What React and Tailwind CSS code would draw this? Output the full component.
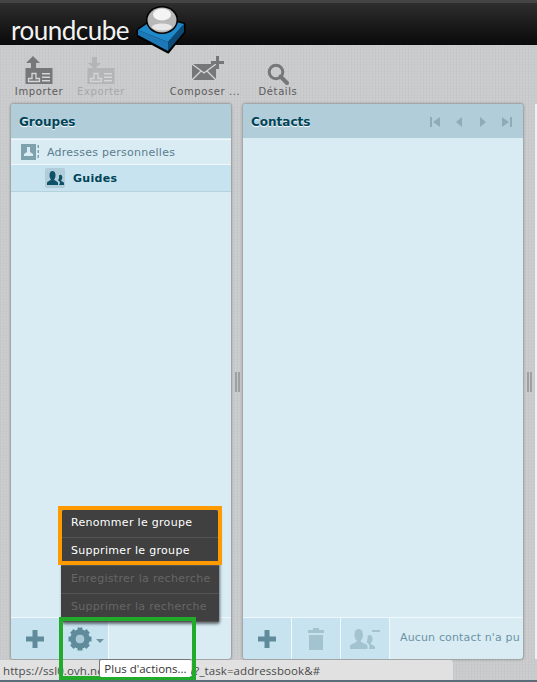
import React from "react";

const F = "font-['DejaVu_Sans',Verdana,sans-serif]";

function CardIcon({ dim, down }) {
  const c = dim ? "#b3b5b6" : "#757779";
  return (
    <svg width="28" height="29" viewBox="0 0 28 29" className="block">
      <rect x="0.5" y="12" width="27" height="16" fill={c} />
      {down ? (
        <path d="M5 1h5v6h4l-6.500 6L1 7h4z" fill={c} />
      ) : (
        <path d="M8 0l7 7h-4v7H6V7H1z" fill={c} />
      )}
      <path d="M3.500 25.500v-3h3.500v-5h4v5h3.500v3z" fill="none" stroke="#d4d6d7" strokeWidth="1.3" />
      <path d="M17 17h8v1.500h-8zM17 20.500h8V22h-8zM17 24h8v1.500h-8z" fill="#d4d6d7" />
    </svg>
  );
}

function MailIcon() {
  return (
    <svg width="32" height="29" viewBox="0 0 32 29" className="block">
      <path d="M0 8h24v16H0z" fill="#757779" />
      <path d="M0 8l12 9 12-9M0 24l9-9M24 24l-9-9" fill="none" stroke="#d4d6d7" strokeWidth="1.3" />
      <path d="M24 0h3v5h5v3h-5v5h-3V8h-5V5h5z" fill="#757779" />
    </svg>
  );
}

function SearchIcon() {
  return (
    <svg width="22" height="22" viewBox="0 0 22 22" className="block">
      <circle cx="9" cy="9" r="6.800" fill="none" stroke="#757779" strokeWidth="3" />
      <path d="M13.500 13.500L20 20" stroke="#757779" strokeWidth="4" strokeLinecap="round" />
    </svg>
  );
}

function Logo() {
  return (
    <div className="flex items-start h-[45px] relative">
      <span className="font-['Lato',sans-serif] font-normal text-[26px] leading-none text-[#f2f2f2] tracking-[-0.5px] ml-[11px] mt-[17px]">
        roundcube
      </span>
      <svg width="52" height="50" viewBox="0 0 52 50" className="absolute left-[136px] top-[5px]">
        <path d="M2 25L21 12l27 7v8L32 47 2 31z" fill="#000" stroke="#000" strokeWidth="3" strokeLinejoin="round" />
        <path d="M2 25l30 12v9L2 30z" fill="#1d78b8" />
        <path d="M32 37l16-18v8L32 46z" fill="#0d4a78" />
        <path d="M2 25L21 12l27 7-16 18z" fill="#1f8acb" />
        <ellipse cx="26" cy="15" rx="16" ry="14" fill="#000" />
        <ellipse cx="26" cy="15" rx="14.500" ry="12.500" fill="#b8b8b8" />
        <ellipse cx="26" cy="9.500" rx="9" ry="6" fill="#f4f4f4" />
        <ellipse cx="26" cy="22" rx="10" ry="3.500" fill="#e8e8e8" />
      </svg>
    </div>
  );
}

function ToolBtn({ label, dim, icon, w, shift }) {
  return (
    <div className={`flex flex-col items-center ${w}`}>
      <div className={`h-[32px] flex items-end justify-center ${shift || ""}`}>{icon}</div>
      <span className={`text-[10px] leading-[12px] mt-[1px] tracking-[0.6px] whitespace-nowrap ${dim ? "text-[#a6a8a9]" : "text-[#5e5a5c]"}`}>
        {label}
      </span>
    </div>
  );
}

function Pager() {
  const c = "#8fabb8";
  return (
    <div className="flex items-center gap-[14px] mr-[11px] mt-[1px]">
      <svg width="10" height="10" viewBox="0 0 10 10"><path d="M0 0h2v10H0zM10 0v10L3 5z" fill={c} /></svg>
      <svg width="10" height="10" viewBox="0 0 10 10"><path d="M8 0v10L2 5z" fill={c} /></svg>
      <svg width="10" height="10" viewBox="0 0 10 10"><path d="M2 0v10l6-5z" fill={c} /></svg>
      <svg width="10" height="10" viewBox="0 0 10 10"><path d="M10 0H8v10h2zM0 0v10l7-5z" fill={c} /></svg>
    </div>
  );
}

function Plus({ color = "#5f8b9b" }) {
  return (
    <svg width="18" height="18" viewBox="0 0 18 18" className="block">
      <path d="M6.500 0h5v6.500H18v5h-6.500V18h-5v-6.500H0v-5h6.500z" fill={color} />
    </svg>
  );
}

function Gear() {
  return (
    <svg width="24" height="24" viewBox="0 0 24 24" className="block">
      <g fill="#5f8b9b">
        {[0, 45, 90, 135, 180, 225, 270, 315].map((a) => (
          <rect key={a} x="9.500" y="0.500" width="5" height="5" transform={`rotate(${a} 12 12)`} />
        ))}
      </g>
      <circle cx="12" cy="12" r="7" fill="none" stroke="#5f8b9b" strokeWidth="5.500" />
      <circle cx="12" cy="12" r="4" fill="#a9c9d6" />
    </svg>
  );
}

function Trash() {
  return (
    <svg width="18" height="22" viewBox="0 0 18 22" className="block">
      <path d="M6 0h6v2h5v3H1V2h5zM2 7h14v15H2z" fill="#a3c3d1" />
    </svg>
  );
}

function UserMinus() {
  return (
    <svg width="30" height="22" viewBox="0 0 30 22" className="block">
      <path d="M0 21v-3c0-2 6-3 7-5-2-2-2.500-4-2.500-6C4.500 3 6 1 8.500 1S13 3 13 7c0 2-.5 4-2.500 6 1 2 7 3 7 5v3z" fill="#a3c3d1" />
      <path d="M19 21h6v-2c0-1.500-3.500-2-4.500-3.500 1.500-1.500 2-3 2-4.500 0-2.500-1-4-3-4-1 0-1.500.5-2 1 .5 2 0 4-1 6 2 2 3 2.500 3 4z" fill="#a3c3d1" />
      <path d="M22 2h8v2h-8z" fill="#a3c3d1" />
    </svg>
  );
}

function FooterCell({ children }) {
  return (
    <div className="w-[49px] h-full bg-[#c7e3ef] border-r border-[#f0f8fb] flex items-center justify-center shrink-0">
      {children}
    </div>
  );
}

function Panel({ title, pager, width, children, footer }) {
  return (
    <section className={`${width} shrink-0 h-[555px] rounded-[3px] bg-[#d9ecf4] shadow-[0_0_2px_1px_rgba(90,90,90,0.45)] flex flex-col overflow-hidden`}>
      <div className="h-[34px] bg-[#b0cdd9] flex items-center justify-between shrink-0">
        <h2 className="ml-[8px] mt-[1px] text-[12px] font-bold text-[#004458] [text-shadow:0_1px_1px_#ffffff]">{title}</h2>
        {pager && <Pager />}
      </div>
      <div className="flex-1 min-h-0">{children}</div>
      <div className="h-[42px] border-t border-[#f0f8fb] flex items-stretch shrink-0">{footer}</div>
    </section>
  );
}

function MenuItem({ children, dim }) {
  return (
    <div className={`h-[28px] flex items-center pl-[10px] text-[11px] tracking-[0.3px] whitespace-nowrap border-b border-[#555] ${dim ? "text-[#666666]" : "text-white"}`}>
      {children}
    </div>
  );
}

function Splitter() {
  return (
    <div className="w-[12px] h-[555px] shrink-0 flex items-center justify-center gap-[1px]">
      <span className="w-[2px] h-[20px] bg-[#9ea0a1]" />
      <span className="w-[2px] h-[20px] bg-[#9ea0a1]" />
    </div>
  );
}

export default function App() {
  return (
    <div className={`${F} relative w-[537px] h-[682px] overflow-hidden bg-[#c9cbcc] bg-[repeating-linear-gradient(90deg,rgba(0,0,0,0.025)_0_1px,transparent_1px_3px),repeating-linear-gradient(0deg,rgba(255,255,255,0.05)_0_1px,transparent_1px_3px)]`}>
      <header className="h-[45px] border-t-[3px] border-[#444] bg-gradient-to-b from-[#2e2e2e] to-[#0a0a0a]">
        <div className="-mt-[3px]"><Logo /></div>
      </header>

      <div className="h-[59px] flex items-start pt-[8px] pl-[12px]">
        <ToolBtn label="Importer" w="w-[54px]" icon={<CardIcon />} />
        <ToolBtn label="Exporter" dim w="w-[54px] ml-[8px]" icon={<CardIcon dim down />} />
        <ToolBtn label="Composer ..." w="w-[70px] ml-[42px]" shift="ml-[6px]" icon={<MailIcon />} />
        <ToolBtn label="Détails" w="w-[44px] ml-[16px]" icon={<SearchIcon />} />
      </div>

      <main className="flex items-start pl-[11px]">
        <Panel
          title="Groupes"
          width="w-[220px]"
          footer={
            <>
              <FooterCell><Plus /></FooterCell>
              <FooterCell>
                <div className="flex items-center gap-[4px] pl-[4px]">
                  <Gear />
                  <span className="border-x-[4px] border-x-transparent border-t-[4px] border-t-[#6d93a3] mt-[4px]" />
                </div>
              </FooterCell>
            </>
          }
        >
          <div className="h-[26px] flex items-center border-t border-b border-[#f0f8fb] mt-[1px] text-[11px] text-[#5a7c8c] tracking-[0.25px]">
            <svg width="18" height="16" viewBox="0 0 18 16" className="block ml-[10px] shrink-0">
              <rect x="0" y="0" width="15" height="16" fill="#7ea1ae" />
              <path d="M6 3h3v5l3 2v2H3v-2l3-2z" fill="#d9ecf4" />
              <path d="M16.500 1h1.500v3h-1.500zM16.500 6h1.500v3h-1.500zM16.500 11h1.500v3h-1.500z" fill="#7ea1ae" />
            </svg>
            <span className="ml-[8px] mt-[2px]">Adresses personnelles</span>
          </div>
          <div className="h-[27px] flex items-center bg-[#c7e3ef] border-b border-[#b5d3df] text-[11px] font-bold text-[#004458]">
            <span className="ml-[34px] w-[20px] h-[20px] bg-[#b0cdd9] rounded-[2px] flex items-center justify-center shrink-0">
              <svg width="17" height="14" viewBox="0 0 17 14">
                <path d="M0 14v-2c0-1.500 3-2 4-3.500C3 7.500 2.500 6 2.500 4 2.500 1.500 3.800 0 5.500 0S8.500 1.500 8.500 4c0 2-.5 3.500-1.500 4.500 1 1.500 4 2 4 3.500v2z" fill="#0e5268" />
                <path d="M12 14h5v-2c0-1-2.500-1.500-3-2.500 1-1 1.300-2 1.300-3 0-1.800-.8-2.800-2-2.800-.5 0-1 .2-1.300.6.300 2 0 3.700-1 5 1.500 1 2 1.500 2 2.700z" fill="#0e5268" />
              </svg>
            </span>
            <span className="ml-[8px] mt-[3px] tracking-[0.3px]">Guides</span>
          </div>
        </Panel>

        <Splitter />

        <Panel
          title="Contacts"
          pager
          width="w-[280px]"
          footer={
            <>
              <FooterCell><Plus /></FooterCell>
              <FooterCell><Trash /></FooterCell>
              <FooterCell><UserMinus /></FooterCell>
              <span className="ml-[10px] self-center text-[11px] text-[#6c93a4] tracking-[0.15px] whitespace-nowrap overflow-hidden">Aucun contact n'a pu</span>
            </>
          }
        />

        <Splitter />
        <div className="w-[2px] h-[555px] bg-[#e8f3f7] shrink-0" />
      </main>

      {/* Popup menu */}
      <div className="absolute left-[61px] top-[510px] w-[158px] bg-[#404040] rounded-[3px] shadow-[1px_2px_3px_rgba(0,0,0,0.55)]">
        <MenuItem>Renommer le groupe</MenuItem>
        <MenuItem>Supprimer le groupe</MenuItem>
        <MenuItem dim>Enregistrer la recherche</MenuItem>
        <MenuItem dim>Supprimer la recherche</MenuItem>
      </div>

      {/* Annotation box */}
      <div className="absolute left-[58px] top-[506px] w-[164px] h-[59px] border-[4px] border-[#ff9a00]" />

      {/* Browser status bar */}
      <div className="absolute left-0 top-[660px] w-[453px] h-[20px] bg-[#e1e1e1] rounded-tr-[3px] pl-[3px] pt-[1px] flex items-center text-[11.5px] tracking-[0.1px] text-[#4a4a4a] font-['Open_Sans',sans-serif] whitespace-nowrap overflow-hidden">
        https://ssl0.ovh.net/roundcube/ab/?_task=addressbook&amp;#
      </div>
      <div className="absolute left-0 top-[680px] w-[537px] h-[2px] bg-[#5b6b78]" />

      <div className="absolute left-[59px] top-[617px] w-[137px] h-[63px] border-[4px] border-[#22ab2a]" />

      {/* Tooltip */}
      <div className="absolute left-[99px] top-[659px] w-[92px] h-[18px] bg-white border-t border-l border-[#767676] rounded-[2px] flex items-center justify-center text-[11.5px] text-[#333] font-['Open_Sans',sans-serif] whitespace-nowrap">
        Plus d'actions...
      </div>
    </div>
  );
}
